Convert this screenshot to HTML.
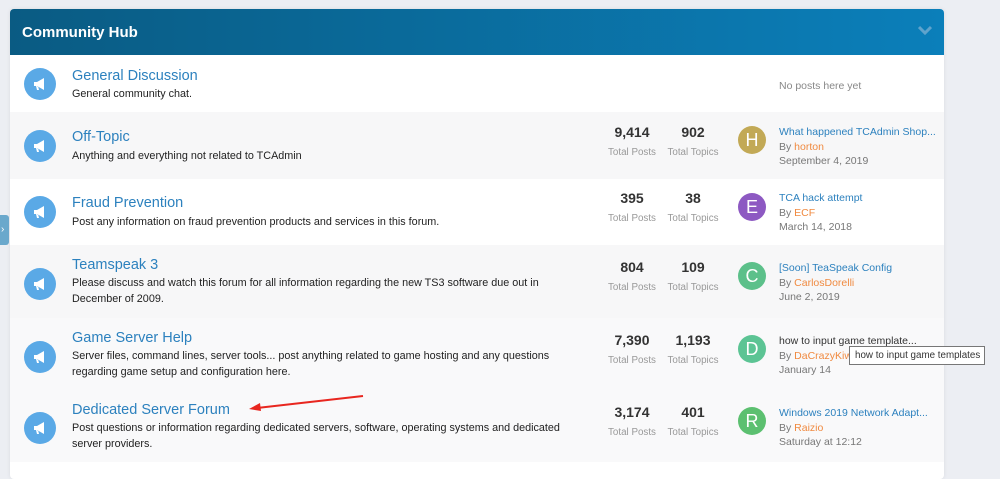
<!DOCTYPE html>
<html><head><meta charset="utf-8"><style>
*{margin:0;padding:0;box-sizing:border-box}
body{width:1000px;height:467px;overflow:hidden;background:#eceef3;font-family:"Liberation Sans",sans-serif;position:relative}
.panel{position:absolute;left:10px;top:9px;width:934px;height:470px;background:#fff;border-radius:4px;overflow:hidden;box-shadow:0 0 4px rgba(0,0,0,.08)}
.hdr{height:46px;background:linear-gradient(90deg,#0a5b83,#0b7fba);color:#fff;font-weight:bold;font-size:15px;padding:15px 12px}
.chev{position:absolute;right:12px;top:16px;width:14px;height:10px}
.row{position:absolute;left:0;width:934px}
.ic{position:absolute;left:14px;width:32px;height:32px;border-radius:50%;background:#5aa9e6}
.ic svg{position:absolute;left:8px;top:8px}
.t{position:absolute;left:62px;font-size:14.5px;color:#2c81be}
.d{position:absolute;left:62px;font-size:10.8px;color:#222;line-height:16px;width:490px}
.n{position:absolute;font-size:14px;font-weight:bold;color:#333;text-align:center;width:60px}
.l{position:absolute;font-size:9.8px;color:#999;text-align:center;width:60px}
.av{position:absolute;left:728px;width:28px;height:28px;border-radius:50%;color:#fff;font-size:18px;text-align:center;line-height:28px}
.lt{position:absolute;left:769px;font-size:10.5px;line-height:14.5px;color:#777;white-space:nowrap}
.lt a{color:#2c81be;text-decoration:none}
.lt b{font-weight:normal;color:#f08a40}
</style></head><body>
<div class="panel">
<div class="hdr">Community Hub</div>
<svg class="chev" viewBox="0 0 14 10"><path d="M1 2l6 6 6-6" stroke="#5fa3cc" stroke-width="3" fill="none"/></svg>
</div>
<div style="position:absolute;left:0;top:215px;width:9px;height:30px;background:#6aa8cc;border-radius:0 3px 3px 0;color:#fff;font-size:10px;line-height:30px;padding-left:1px">›</div>
<div style="position:absolute;left:10px;top:9px;width:934px;height:460px">
<div class="row" style="top:46px;height:57px;background:#fff">
<div class="ic" style="top:13px"><svg width="16" height="16" viewBox="0 0 16 16"><path d="M2 6h3l7-4v12l-7-4H2z M4 10l1 4h2l-1-4" fill="#fff"/></svg></div>
<div class="t" style="top:13px">General Discussion</div><div class="d" style="top:31px">General community chat.</div>
<div class="lt" style="top:24px;color:#888">No posts here yet</div></div>

<div class="row" style="top:103px;height:67px;background:#f7f7f8">
<div class="ic" style="top:18px"><svg width="16" height="16" viewBox="0 0 16 16"><path d="M2 6h3l7-4v12l-7-4H2z M4 10l1 4h2l-1-4" fill="#fff"/></svg></div>
<div class="t" style="top:17px">Off-Topic</div><div class="d" style="top:36px">Anything and everything not related to TCAdmin</div>
<div class="n" style="left:592px;top:12px">9,414</div><div class="l" style="left:592px;top:35px">Total Posts</div>
<div class="n" style="left:653px;top:12px">902</div><div class="l" style="left:653px;top:35px">Total Topics</div>
<div class="av" style="top:14px;background:#c2a956">H</div>
<div class="lt" style="top:13px"><a>What happened TCAdmin Shop...</a><br>By <b>horton</b><br>September 4, 2019</div></div>

<div class="row" style="top:170px;height:66px;background:#fff">
<div class="ic" style="top:17px"><svg width="16" height="16" viewBox="0 0 16 16"><path d="M2 6h3l7-4v12l-7-4H2z M4 10l1 4h2l-1-4" fill="#fff"/></svg></div>
<div class="t" style="top:16px">Fraud Prevention</div><div class="d" style="top:35px">Post any information on fraud prevention products and services in this forum.</div>
<div class="n" style="left:592px;top:11px">395</div><div class="l" style="left:592px;top:34px">Total Posts</div>
<div class="n" style="left:653px;top:11px">38</div><div class="l" style="left:653px;top:34px">Total Topics</div>
<div class="av" style="top:14px;background:#8d59c2">E</div>
<div class="lt" style="top:12px"><a>TCA hack attempt</a><br>By <b>ECF</b><br>March 14, 2018</div></div>

<div class="row" style="top:236px;height:73px;background:#f7f7f8">
<div class="ic" style="top:23px"><svg width="16" height="16" viewBox="0 0 16 16"><path d="M2 6h3l7-4v12l-7-4H2z M4 10l1 4h2l-1-4" fill="#fff"/></svg></div>
<div class="t" style="top:12px">Teamspeak 3</div><div class="d" style="top:30px">Please discuss and watch this forum for all information regarding the new TS3 software due out in December of 2009.</div>
<div class="n" style="left:592px;top:14px">804</div><div class="l" style="left:592px;top:37px">Total Posts</div>
<div class="n" style="left:653px;top:14px">109</div><div class="l" style="left:653px;top:37px">Total Topics</div>
<div class="av" style="top:17px;background:#5cc08a">C</div>
<div class="lt" style="top:16px"><a>[Soon] TeaSpeak Config</a><br>By <b>CarlosDorelli</b><br>June 2, 2019</div></div>

<div class="row" style="top:309px;height:72px;background:#f9f9fa">
<div class="ic" style="top:23px"><svg width="16" height="16" viewBox="0 0 16 16"><path d="M2 6h3l7-4v12l-7-4H2z M4 10l1 4h2l-1-4" fill="#fff"/></svg></div>
<div class="t" style="top:12px">Game Server Help</div><div class="d" style="top:30px">Server files, command lines, server tools... post anything related to game hosting and any questions regarding game setup and configuration here.</div>
<div class="n" style="left:592px;top:14px">7,390</div><div class="l" style="left:592px;top:37px">Total Posts</div>
<div class="n" style="left:653px;top:14px">1,193</div><div class="l" style="left:653px;top:37px">Total Topics</div>
<div class="av" style="top:17px;background:#5cc494">D</div>
<div class="lt" style="top:16px"><a style="color:#333">how to input game template...</a><br>By <b>DaCrazyKiwi</b><br>January 14</div></div>

<div class="row" style="top:381px;height:72px;background:#f9f9fa">
<div class="ic" style="top:22px"><svg width="16" height="16" viewBox="0 0 16 16"><path d="M2 6h3l7-4v12l-7-4H2z M4 10l1 4h2l-1-4" fill="#fff"/></svg></div>
<div class="t" style="top:12px">Dedicated Server Forum</div><div class="d" style="top:30px">Post questions or information regarding dedicated servers, software, operating systems and dedicated server providers.</div>
<div class="n" style="left:592px;top:14px">3,174</div><div class="l" style="left:592px;top:37px">Total Posts</div>
<div class="n" style="left:653px;top:14px">401</div><div class="l" style="left:653px;top:37px">Total Topics</div>
<div class="av" style="top:17px;background:#5cc070">R</div>
<div class="lt" style="top:16px"><a>Windows 2019 Network Adapt...</a><br>By <b>Raizio</b><br>Saturday at 12:12</div></div>
</div>
<div style="position:absolute;left:849px;top:346px;width:136px;height:19px;background:#fff;border:1px solid #777;font-size:9.8px;color:#333;padding:3px 5px;white-space:nowrap;overflow:hidden">how to input game templates</div>
<svg style="position:absolute;left:245px;top:395px" width="120" height="20"><path d="M118 1L12 13" stroke="#e8261f" stroke-width="2"/><path d="M4 14l11-6 1 8z" fill="#e8261f"/></svg>
</body></html>
